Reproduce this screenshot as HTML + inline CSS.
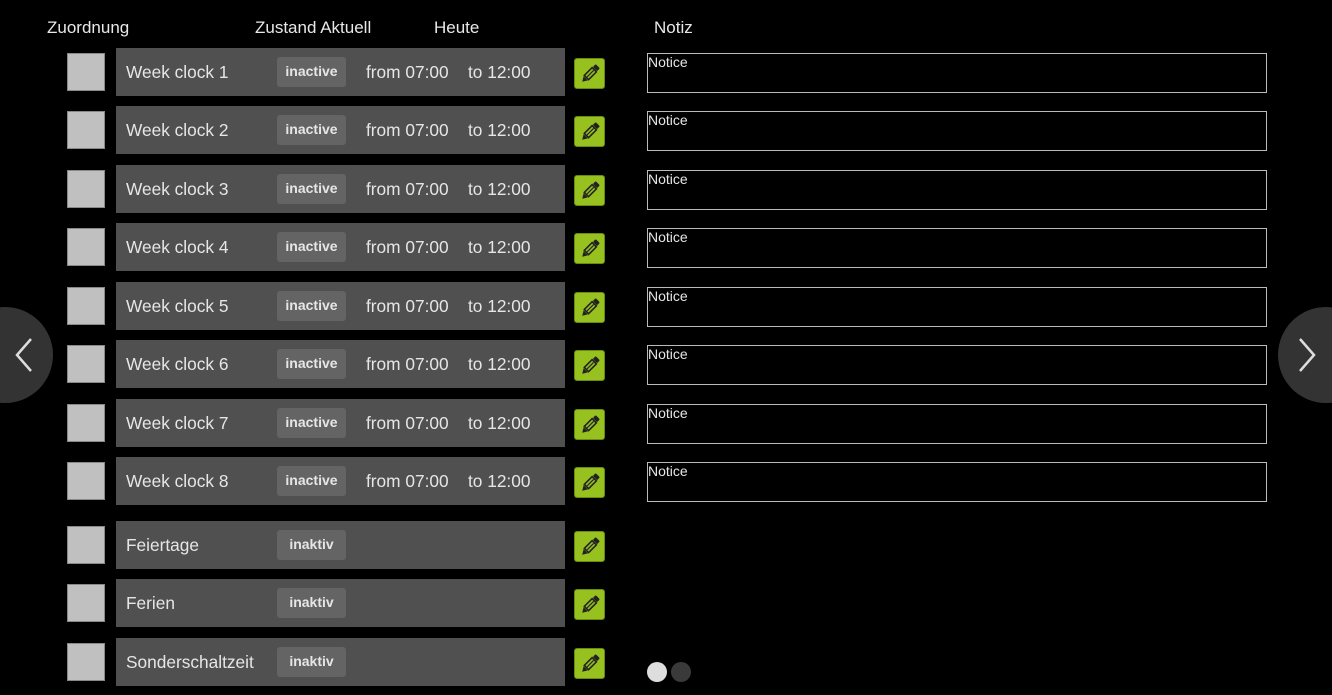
<!DOCTYPE html>
<html><head><style>
body{margin:0;width:1332px;height:695px;background:#000;position:relative;overflow:hidden;font-family:"Liberation Sans",sans-serif;color:#ddd}
.h{position:absolute;top:18px;font-size:17px;color:#e8e8e8}
.cb{position:absolute;left:67px;width:36px;height:36px;background:#c0c0c0;border:1px solid #888}
.bar{position:absolute;left:116px;width:449px;height:48px;background:#505050}
.name{position:absolute;left:10px;top:14px;font-size:17.3px;color:#e6e6e6}
.badge{position:absolute;left:161px;top:9px;width:69px;height:30px;background:#646464;border-radius:3px;font-size:14px;font-weight:bold;color:#e6e6e6;text-align:center;line-height:28px}
.t{position:absolute;top:14px;font-size:17.3px;color:#e6e6e6}
.ed{position:absolute;left:574px;width:29px;height:29px;background:#96c11f;border:1px solid #6a8a10;border-radius:3px}
.ed svg{position:absolute;left:3px;top:3px}
.nb{position:absolute;left:647px;width:618px;height:38px;border:1px solid #bbb}
.nb span{position:absolute;left:0;top:0;font-size:14px;color:#e6e6e6}
.circ{position:absolute;top:307px;width:96px;height:96px;border-radius:50%;background:#333}
.dot{position:absolute;top:662px;width:20px;height:20px;border-radius:50%}
</style></head><body>
<div class="h" style="left:47px">Zuordnung</div>
<div class="h" style="left:255px">Zustand Aktuell</div>
<div class="h" style="left:434px">Heute</div>
<div class="h" style="left:654px">Notiz</div>
<div id="rows"></div>
<div class="circ" style="left:-43px"><svg style="position:absolute;left:56px;top:30px" width="24" height="36"><path d="M18 2 L4 18 L18 34" stroke="#ddd" stroke-width="2.5" fill="none"/></svg></div>
<div class="circ" style="left:1278px"><svg style="position:absolute;left:16px;top:30px" width="24" height="36"><path d="M6 2 L20 18 L6 34" stroke="#ddd" stroke-width="2.5" fill="none"/></svg></div>
<div class="dot" style="left:647px;background:#ddd"></div>
<div class="dot" style="left:671px;background:#3a3a3a"></div>
<script>
var tops=[48,106,165,223,282,340,399,457,521,579,638];
var names=["Week clock 1","Week clock 2","Week clock 3","Week clock 4","Week clock 5","Week clock 6","Week clock 7","Week clock 8","Feiertage","Ferien","Sonderschaltzeit"];
var pen='<svg width="24" height="24" viewBox="0 0 24 24"><g transform="rotate(45 12 12)"><rect x="9" y="1" width="6" height="4" rx="1" fill="#222"/><rect x="9" y="6" width="6" height="11" fill="none" stroke="#222" stroke-width="1.6"/><line x1="12" y1="7" x2="12" y2="16" stroke="#222" stroke-width="1.2"/><path d="M9 18 L15 18 L12 23 Z" fill="#222"/></g></svg>';
var h='';
tops.forEach(function(t,i){
 var wk=i<8;
 h+='<div class="cb" style="top:'+(t+5)+'px"></div>';
 h+='<div class="bar" style="top:'+t+'px"><div class="name">'+names[i]+'</div><div class="badge">'+(wk?'inactive':'inaktiv')+'</div>'+(wk?'<div class="t" style="left:250px">from 07:00</div><div class="t" style="left:352px">to 12:00</div>':'')+'</div>';
 h+='<div class="ed" style="top:'+(t+10)+'px">'+pen+'</div>';
 if(wk)h+='<div class="nb" style="top:'+(t+5)+'px"><span>Notice</span></div>';
});
document.getElementById('rows').innerHTML=h;
</script>
</body></html>
